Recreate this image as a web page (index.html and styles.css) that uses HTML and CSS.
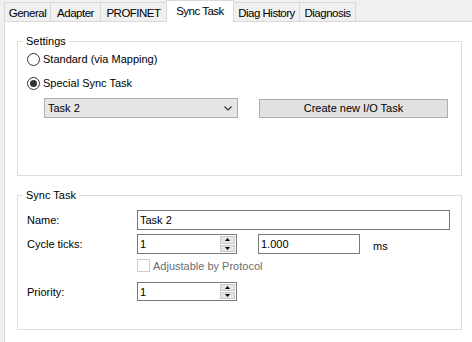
FILE: index.html
```html
<!DOCTYPE html>
<html>
<head>
<meta charset="utf-8">
<link rel="stylesheet" href="styles.css">
</head>
<body>
<div class="tabs">
  <div class="tab tab-general">General</div>
  <div class="tab tab-adapter">Adapter</div>
  <div class="tab tab-profinet">PROFINET</div>
  <div class="tab tab-sync selected">Sync Task</div>
  <div class="tab tab-diaghist">Diag History</div>
  <div class="tab tab-diag last">Diagnosis</div>
</div>
<div class="panel">
  <fieldset class="group group-settings">
    <legend>Settings</legend>
    <div class="radio-row first">
      <span class="radio"></span><span class="label">Standard (via Mapping)</span>
    </div>
    <div class="radio-row second">
      <span class="radio checked"><span class="dot"></span></span><span class="label">Special Sync Task</span>
    </div>
    <div class="select-row">
      <div class="combo">
        <span class="combo-text">Task 2</span>
        <svg class="chevron" width="8" height="5" viewBox="0 0 8 5"><path d="M0.5 0.5 L4 4 L7.5 0.5" fill="none" stroke="#333" stroke-width="1.2"/></svg>
      </div>
      <div class="button">Create new I/O Task</div>
    </div>
  </fieldset>
  <fieldset class="group group-sync">
    <legend>Sync Task</legend>
    <div class="form-row row-name">
      <span class="flabel">Name:</span>
      <div class="textbox wide"><span class="value">Task 2</span></div>
    </div>
    <div class="form-row row-cycle">
      <span class="flabel">Cycle ticks:</span>
      <div class="textbox spin">
        <span class="value">1</span>
        <div class="spinner">
          <div class="spin-btn up"><svg width="5" height="3" viewBox="0 0 5 3"><path d="M0 3 L2.5 0 L5 3 Z" fill="#000"/></svg></div>
          <div class="spin-btn down"><svg width="5" height="3" viewBox="0 0 5 3"><path d="M0 0 L2.5 3 L5 0 Z" fill="#000"/></svg></div>
        </div>
      </div>
      <div class="textbox ms-box"><span class="value">1.000</span></div>
      <span class="unit">ms</span>
    </div>
    <div class="form-row row-check">
      <span class="checkbox"></span><span class="check-label">Adjustable by Protocol</span>
    </div>
    <div class="form-row row-priority">
      <span class="flabel">Priority:</span>
      <div class="textbox spin">
        <span class="value">1</span>
        <div class="spinner">
          <div class="spin-btn up"><svg width="5" height="3" viewBox="0 0 5 3"><path d="M0 3 L2.5 0 L5 3 Z" fill="#000"/></svg></div>
          <div class="spin-btn down"><svg width="5" height="3" viewBox="0 0 5 3"><path d="M0 0 L2.5 3 L5 0 Z" fill="#000"/></svg></div>
        </div>
      </div>
    </div>
  </fieldset>
</div>
</body>
</html>
```
FILE: styles.css
```css
* { box-sizing: border-box; }
html, body { margin: 0; padding: 0; }
body {
  width: 472px;
  height: 342px;
  overflow: hidden;
  background: #f0f0f0;
  font-family: "Liberation Sans", Arial, sans-serif;
  font-size: 11px;
  color: #000;
}
.tabs {
  display: flex;
  align-items: flex-end;
  height: 21px;
  padding-left: 4px;
}
.tab {
  height: 19px;
  border: 1px solid #d9d9d9;
  border-bottom: none;
  border-right: none;
  background: #f0f0f0;
  display: flex;
  align-items: center;
  justify-content: center;
  font-size: 11.5px;
  letter-spacing: -0.5px;
  padding-top: 1px;
}
.tab.last { border-right: 1px solid #d9d9d9; }
.tab-general { width: 46px; }
.tab-adapter { width: 50px; }
.tab-profinet { width: 66px; }
.tab-sync { width: 68px; }
.tab-diaghist { width: 65px; }
.tab-diag { width: 57px; }
.tab.selected {
  height: 22px;
  margin-bottom: -1px;
  background: #fff;
  border-right: 1px solid #d9d9d9;
  position: relative;
  z-index: 1;
  padding-top: 0;
  padding-bottom: 2px;
}
.tab.selected + .tab { border-left: none; }
.panel {
  margin-left: 4px;
  height: 321px;
  background: #fff;
  border-top: 1px solid #d9d9d9;
  border-left: 1px solid #d9d9d9;
  padding-left: 12px;
  padding-top: 13px;
}
.group {
  width: 445px;
  margin: 0;
  border: 1px solid #dcdcdc;
  padding: 0 0 0 9px;
}
.group legend {
  padding: 0 3px;
  margin-left: -4px;
  line-height: 12px;
  font-size: 11px;
}
.group-settings { padding-bottom: 57px; }
.group-sync { margin-top: 13px; padding-bottom: 28px; }

.radio-row {
  display: flex;
  align-items: center;
  height: 14px;
}
.radio-row.first { margin-top: 5px; }
.radio-row.second { margin-top: 10px; }
.radio {
  width: 13px;
  height: 13px;
  border: 1px solid #333;
  border-radius: 50%;
  background: #fff;
  display: flex;
  align-items: center;
  justify-content: center;
}
.radio .dot {
  width: 7px;
  height: 7px;
  border-radius: 50%;
  background: #333;
}
.radio-row .label { margin-left: 3px; }
.select-row {
  display: flex;
  align-items: center;
  margin-top: 8px;
  margin-left: 17px;
}
.combo {
  width: 194px;
  height: 20px;
  border: 1px solid #adadad;
  background: #e5e5e5;
  display: flex;
  align-items: center;
  justify-content: space-between;
  padding: 0 5px 0 3px;
}
.chevron { margin-top: 1px; }
.button {
  margin-left: 21px;
  width: 189px;
  height: 19px;
  border: 1px solid #adadad;
  background: #e1e1e1;
  display: flex;
  align-items: center;
  justify-content: center;
}

.form-row {
  display: flex;
  align-items: center;
}
.flabel { width: 110px; }
.row-name { margin-top: 9px; }
.row-cycle { margin-top: 4px; }
.row-check { margin-top: 5px; margin-left: 110px; height: 13px; }
.row-priority { margin-top: 10px; }
.textbox {
  height: 20px;
  border: 1px solid #7a7a7a;
  background: #fff;
  display: flex;
  align-items: center;
  padding-left: 2px;
}
.textbox .value { flex: 1; }
.textbox.wide { width: 313px; }
.textbox.spin { width: 100px; padding-right: 1px; }
.row-priority .textbox { height: 19px; }
.textbox.ms-box { width: 102px; margin-left: 21px; }
.unit { margin-left: 13px; margin-top: 3px; }
.spinner {
  width: 15px;
  align-self: stretch;
  display: flex;
  flex-direction: column;
  padding: 1px 0;
  gap: 1px;
}
.spin-btn {
  flex: 1;
  background: #e5e5e5;
  border: 1px solid #c9c9c9;
  display: flex;
  align-items: center;
  justify-content: center;
}
.checkbox {
  width: 13px;
  height: 13px;
  border: 1px solid #cccccc;
  background: #fff;
}
.check-label { margin-left: 3px; color: #6d6d6d; }
```
